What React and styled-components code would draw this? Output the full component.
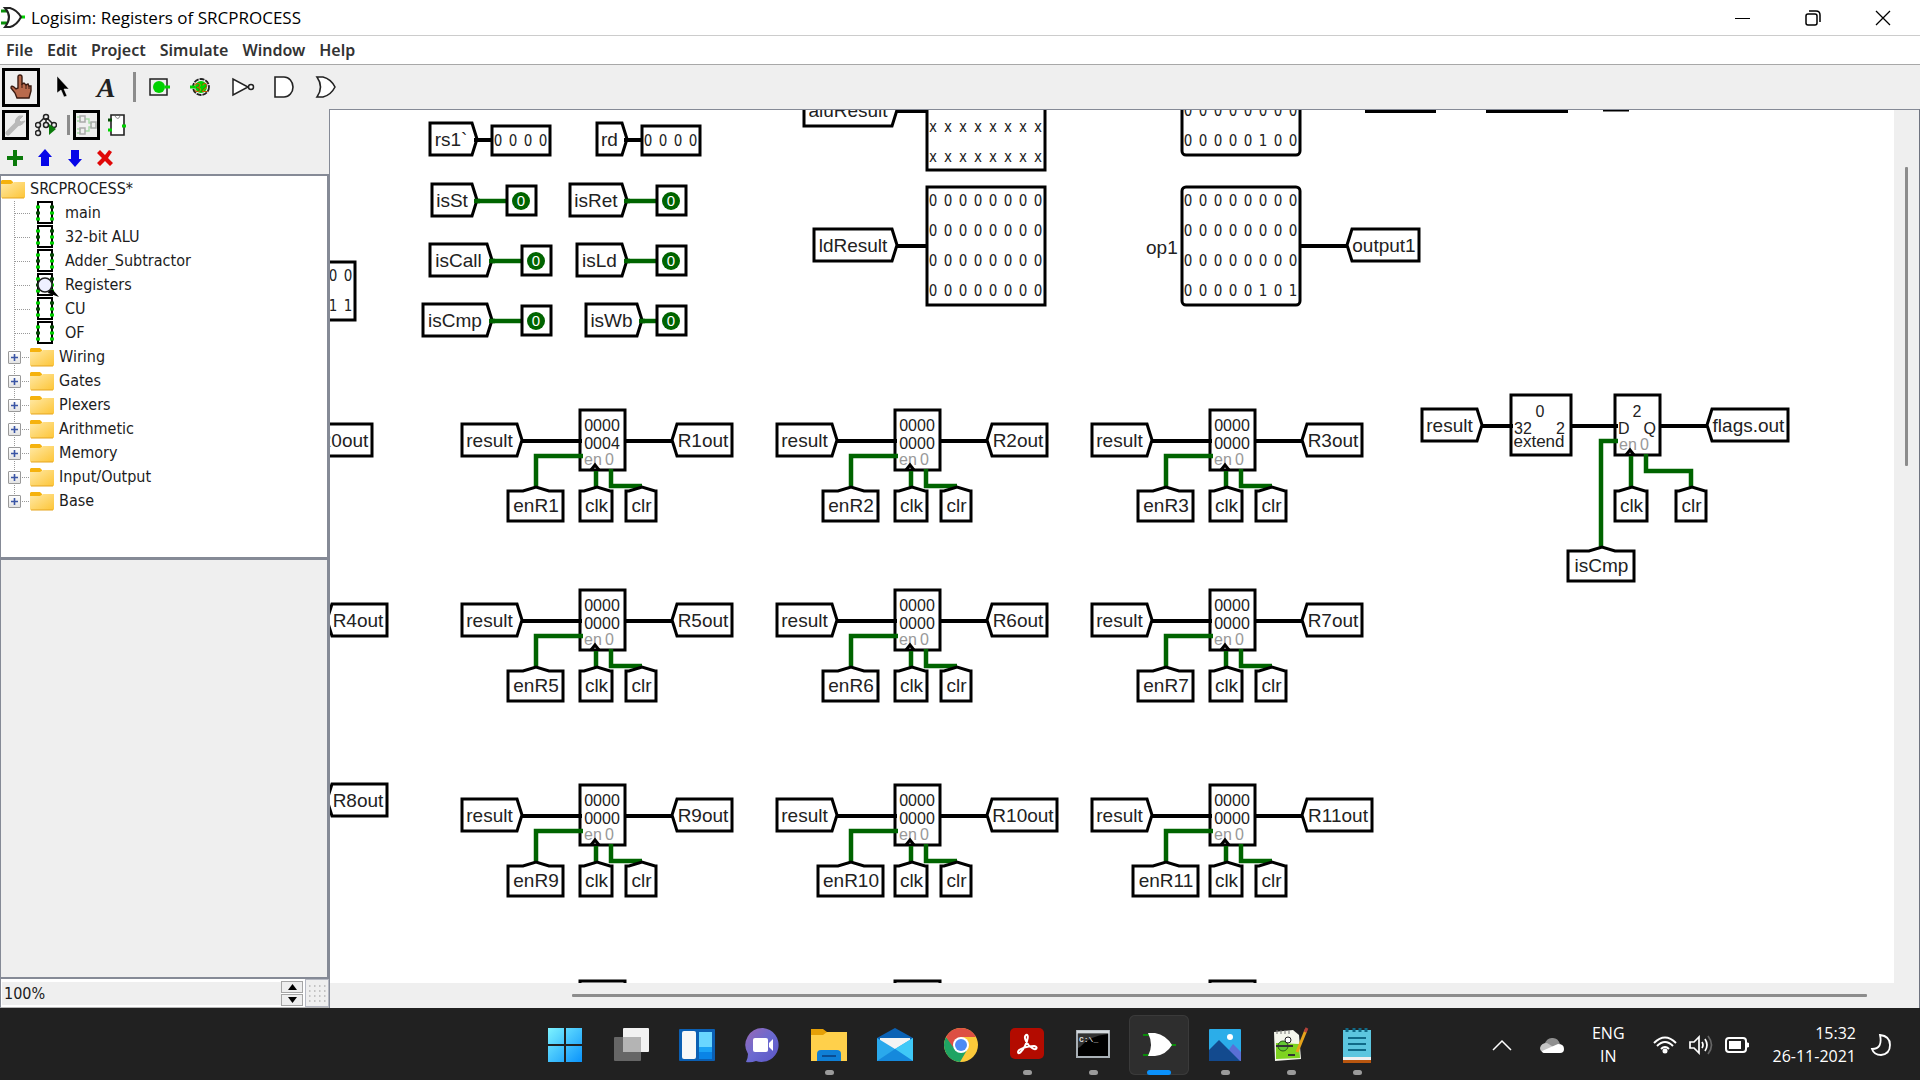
import React from "react";
import styled, { createGlobalStyle, css } from "styled-components";

const GREEN = "#006400";
const LIVE = "#00d200";

const GlobalStyle = createGlobalStyle`
  * { box-sizing: border-box; }
  html, body { margin: 0; padding: 0; background: #efefef; }
  body { font-family: "DejaVu Sans Condensed", "DejaVu Sans", sans-serif; font-size: 16px; color: #1c1c1c; overflow: hidden; }
  button, input { font: inherit; color: inherit; margin: 0; padding: 0; border: 0; background: none; }
  svg { display: block; flex: none; }
  ul { list-style: none; margin: 0; padding: 0; }
`;

const Screen = styled.div`
  display: flex;
  flex-direction: column;
  height: 100vh;
`;

const TitleBar = styled.header`
  display: flex;
  align-items: center;
  height: 36px;
  flex: none;
  padding: 0 2px 0 1px;
  background: #fff;
  border-bottom: 1px solid #ccc;
`;

const Title = styled.h1`
  flex: 1;
  margin: 0 0 0 6px;
  font: 400 17px/36px "Open Sans", "Noto Sans", sans-serif;
  color: #000;
`;

const CaptionButton = styled.button`
  display: flex;
  align-items: center;
  justify-content: center;
  width: 70px;
  height: 35px;
`;

const MenuBar = styled.nav`
  display: flex;
  align-items: center;
  gap: 14px;
  height: 29px;
  flex: none;
  padding: 0 6px;
  background: #fff;
  border-bottom: 1px solid #a8a8a8;
`;

const MenuItem = styled.button`
  font: 600 16px/24px "Noto Sans", "Open Sans", sans-serif;
  color: #333;
`;

const ToolBar = styled.div`
  display: flex;
  align-items: center;
  gap: 4px;
  height: 44px;
  flex: none;
  padding: 0 2px;
  background: #efefef;
`;

const ToolButton = styled.button`
  display: flex;
  align-items: center;
  justify-content: center;
  width: ${(p) => (p.$small ? 27 : 38)}px;
  height: ${(p) => (p.$small ? 30 : 39)}px;
  flex: none;
  ${(p) => p.$active && css`border: 3px solid #000;`}
`;

const Separator = styled.span`
  width: 3px;
  height: ${(p) => (p.$small ? 20 : 30)}px;
  margin-left: 5px;
  background: #8c8c8c;
`;

const Body = styled.main`
  display: flex;
  flex: 1;
  min-height: 0;
  background: #efefef;
`;

const Side = styled.aside`
  display: flex;
  flex-direction: column;
  width: 329px;
  flex: none;
`;

const SideTools = styled.div`
  display: flex;
  align-items: center;
  gap: 3px;
  height: ${(p) => p.$height}px;
  padding-left: ${(p) => p.$inset}px;
  flex: none;
`;

const Explorer = styled.ul`
  height: 385px;
  flex: none;
  background: #fff;
  border: 2px solid #858a96;
  border-left-width: 1px;
  padding-top: 1px;
`;

const Branch = styled.li`
  display: flex;
  align-items: center;
  height: 24px;
  padding-left: ${(p) => (p.$root ? 0 : 7)}px;
`;

const Trunk = styled.ul`
  background: repeating-linear-gradient(#999 0 1px, transparent 1px 2px) 13px 0 / 1px 306px no-repeat;
`;

const Twig = styled.span`
  width: ${(p) => (p.$long ? 15 : 8)}px;
  margin-left: ${(p) => (p.$long ? 7 : 1)}px;
  height: 1px;
  background: repeating-linear-gradient(90deg, #999 0 1px, transparent 1px 2px);
`;

const Expander = styled.button`
  display: flex;
  align-items: center;
  justify-content: center;
  width: 13px;
  height: 13px;
  border: 1px solid #999;
  border-radius: 1px;
  background: linear-gradient(#fff, #e4e4e4);
`;

const IconSlot = styled.span`
  display: flex;
  justify-content: center;
  width: ${(p) => (p.$wide ? 30 : 24)}px;
`;

const BranchName = styled.span`
  margin-left: 5px;
  line-height: 24px;
  white-space: pre;
`;

const Attributes = styled.section`
  flex: 1;
  border: 2px solid #858a96;
  border-top-width: 1px;
  border-left-width: 1px;
`;

const ZoomRow = styled.div`
  display: flex;
  height: 29px;
  flex: none;
  border-left: 1px solid #858a96;
  border-bottom: 1px solid #b5b5b5;
`;

const ZoomField = styled.input`
  flex: 1;
  min-width: 0;
  padding-left: 2px;
  background: #efefef;
  border: 2px solid #fff;
  border-width: 3px 0 2px 1px;
`;

const Spinner = styled.div`
  display: flex;
  flex-direction: column;
  width: 24px;
  padding: 2px 2px 1px 0;
  background: #fff;
  gap: 1px;
`;

const SpinButton = styled.button`
  display: flex;
  flex: 1;
  align-items: center;
  justify-content: center;
  border: 1px solid #a5a5a5;
  background: #eee;
`;

const Grip = styled.span`
  display: flex;
  align-items: center;
  justify-content: center;
  width: 24px;
  border: 1px solid #b5b8c2;
`;

const CanvasPane = styled.section`
  display: grid;
  grid-template-columns: minmax(0, 1fr) 25px;
  grid-template-rows: minmax(0, 1fr) 25px;
  flex: 1;
  min-width: 0;
  border-top: 1px solid #858a96;
  border-left: 1px solid #858a96;
  border-right: 1px solid #6f7480;
`;

const Circuit = styled.svg`
  width: 100%;
  height: 100%;
  background: #fff;
  font-family: "Liberation Sans", Arial, sans-serif;
  fill: none;
  stroke: none;
`;

const VerticalTrack = styled.div`
  display: flex;
  justify-content: center;
  padding: 57px 1px 0 0;
`;

const HorizontalTrack = styled.div`
  display: flex;
  align-items: center;
  padding: 0 27px 1px 242px;
`;

const Thumb = styled.span`
  background: #8c8c8c;
  border-radius: 1px;
  ${(p) => (p.$vertical ? css`width: 3px; height: 299px;` : css`height: 3px; flex: 1;`)}
`;

const TaskBar = styled.footer`
  display: grid;
  grid-template-columns: 1fr auto 1fr;
  align-items: center;
  height: 72px;
  flex: none;
  padding-top: 2px;
  background: #212121;
  color: #fff;
  font: 400 16px/23px "Open Sans", "Noto Sans", sans-serif;
`;

const Apps = styled.div`
  grid-column: 2;
  display: flex;
  gap: 6px;
  padding-left: 2px;
`;

const AppButton = styled.button`
  display: grid;
  grid-template-rows: 1fr 6px;
  justify-items: center;
  align-items: center;
  width: 60px;
  height: 60px;
  padding: 6px 0 0;
  border-radius: 6px;
  ${(p) => p.$active && css`background: #2e2e2e; box-shadow: inset 0 0 0 1px #3a3a3a;`}
`;

const Running = styled.span`
  width: ${(p) => (p.$active ? 24 : 9)}px;
  height: 5px;
  border-radius: 3px;
  background: ${(p) => (p.$active ? "#0a91fb" : "#9b9b9b")};
`;

const Tray = styled.div`
  display: flex;
  align-items: center;
  justify-content: flex-end;
  padding-right: 28px;
`;

const TrayButton = styled.button`
  display: flex;
  align-items: center;
  justify-content: center;
  margin-right: ${(p) => p.$after || 0}px;
`;

const Lines = styled.span`
  display: block;
  text-align: ${(p) => p.$align};
  white-space: pre-line;
`;

/* ---------- circuit parts ---------- */

const Wire = ({ d, live }) => (
  <path d={d} stroke={live ? GREEN : "#000"} strokeWidth={live ? 4.5 : 4} />
);

const Label = ({ x, y, size = 16, anchor = "start", fill = "#222", children }) => (
  <text x={x} y={y} fontSize={size} textAnchor={anchor} fill={fill}>{children}</text>
);

/* Tunnel whose point faces right, left or up; x1 and x2 are its outer sides. */
const Tunnel = ({ x1, x2, y, label, face = "right" }) => {
  const l = x1 + 1;
  const r = x2 - 2;
  let d;
  let cx = (x1 + x2) / 2;
  let base = y + 5;
  if (face === "right") {
    d = `M${l} ${y - 18}H${r - 3}L${r + 2} ${y - 2}L${r - 3} ${y + 14}H${l}Z`;
    cx = (x1 + x2 - 4) / 2;
  } else if (face === "left") {
    d = `M${r + 1} ${y - 18}H${l + 5}L${l} ${y - 2}L${l + 5} ${y + 14}H${r + 1}Z`;
    cx = (x1 + x2 + 2) / 2;
  } else {
    const m = Math.round(cx);
    const w = Math.min(13, (r - l) / 2);
    d = `M${l} ${y + 4}H${m - w}L${m} ${y}L${m + w} ${y + 4}H${r}V${y + 34}H${l}Z`;
    base = y + 25;
  }
  return (
    <g>
      <path d={d} stroke="#000" strokeWidth="3" fill="#fff" />
      <Label x={cx} y={base} size={19} anchor="middle">{label}</Label>
    </g>
  );
};

const Bits = ({ x, y, rows }) => (
  <g fontFamily="DejaVu Sans Condensed, DejaVu Sans, sans-serif" fontSize="15" fill="#222" textAnchor="middle">
    {rows.map((row, j) => (
      <text key={j} y={y + j * 30} x={[...row].map((_, i) => x + i * 15).join(" ")}>{row}</text>
    ))}
  </g>
);

const Box = ({ x, y, w, h, r = 0 }) => (
  <rect x={x} y={y} width={w} height={h} rx={r} stroke="#000" strokeWidth="3" fill="#fff" />
);

const BitPin = ({ x, y }) => (
  <g>
    <Box x={x} y={y - 15} w={29} h={29} />
    <circle cx={x + 14} cy={y} r="9" fill={GREEN} />
    <text x={x + 14} y={y + 5} fontSize="15" textAnchor="middle" fill="#fff">0</text>
  </g>
);

const FlagPin = ({ x1, tip, pin, y, label }) => (
  <g>
    <Wire live d={`M${tip} ${y}H${pin + 1}`} />
    <BitPin x={pin} y={y} />
    <Tunnel x1={x1} x2={tip} y={y + 1} label={label} />
    <Wire live d={`M${tip - 3} ${y}H${tip + 3}`} />
  </g>
);

const RegisterBody = ({ x, y, children }) => (
  <g>
    <Box x={x} y={y} w={45} h={60} />
    {children}
    <Label x={x + 4} y={y + 55} fill="#999">en</Label>
    <Label x={x + 25} y={y + 55} fill="#999">0</Label>
    <path d={`M${x + 11} ${y + 60}L${x + 15} ${y + 55}L${x + 19} ${y + 60}`} stroke="#000" strokeWidth="3" />
  </g>
);

const Register = ({ n, x, y, low = "0000" }) => {
  const wide = n > 9 ? 10 : 0;
  return (
    <g>
      <RegisterBody x={x} y={y - 31}>
        <Label x={x + 22} y={y - 10} anchor="middle">0000</Label>
        <Label x={x + 22} y={y + 8} anchor="middle">{low}</Label>
      </RegisterBody>
      <Wire d={`M${x - 60} ${y}H${x + 2}M${x + 45} ${y}H${x + 92}`} />
      <Wire live d={`M${x + 3} ${y + 15}H${x - 44}V${y + 47}M${x + 16} ${y + 30}V${y + 47}M${x + 31} ${y + 28}V${y + 45}H${x + 62}`} />
      <Tunnel x1={x - 119} x2={x - 58} y={y + 1} label="result" />
      <Tunnel face="left" x1={x + 91} x2={x + 153 + wide} y={y + 1} label={`R${n}out`} />
      <Tunnel face="up" x1={x - 73 - wide / 2} x2={x - 15 + wide / 2} y={y + 46} label={`enR${n}`} />
      <Tunnel face="up" x1={x - 1} x2={x + 34} y={y + 46} label="clk" />
      <Tunnel face="up" x1={x + 45} x2={x + 78} y={y + 46} label="clr" />
    </g>
  );
};

const zeros = "00000000";

const flags = [
  { x1: 431, tip: 477, pin: 507, y: 201, label: "isSt" },
  { x1: 569, tip: 627, pin: 657, y: 201, label: "isRet" },
  { x1: 429, tip: 492, pin: 522, y: 261, label: "isCall" },
  { x1: 576, tip: 627, pin: 657, y: 261, label: "isLd" },
  { x1: 422, tip: 492, pin: 522, y: 321, label: "isCmp" },
  { x1: 585, tip: 642, pin: 657, y: 321, label: "isWb" },
];

const registers = [
  [1, 580, 441], [2, 895, 441], [3, 1210, 441],
  [5, 580, 621], [6, 895, 621], [7, 1210, 621],
  [9, 580, 816], [10, 895, 816], [11, 1210, 816],
  [13, 580, 1012], [14, 895, 1012], [15, 1210, 1012],
];

const CircuitDrawing = () => (
  <Circuit role="img" aria-label="Registers circuit">
    <g transform="translate(-330 -110)">
      <Box x={240} y={262} w={115} h={58} />
      <Bits x={333} y={281} rows={["00", "11"]} />

      <Wire d="M476 140H493M626 140H643" />
      <Box x={492} y={126} w={58} h={29} />
      <Bits x={498} y={146} rows={["0000"]} />
      <Box x={642} y={126} w={58} h={29} />
      <Bits x={648} y={146} rows={["0000"]} />
      <Tunnel x1={429} x2={477} y={141} label="rs1`" />
      <Tunnel x1={596} x2={627} y={141} label="rd" />
      <Wire d="M474 140H492M624 140H642" />
      {flags.map((f) => <FlagPin key={f.label} {...f} />)}

      <Box x={927} y={50} w={118} h={120} />
      <Bits x={933} y={132} rows={["xxxxxxxx", "xxxxxxxx"]} />
      <Wire d="M896 111H928M896 246H928" />
      <Tunnel x1={803} x2={897} y={112} label="aluResult" />
      <Box x={927} y={187} w={118} h={118} />
      <Bits x={933} y={206} rows={[zeros, zeros, zeros, zeros]} />
      <Tunnel x1={813} x2={897} y={247} label="ldResult" />

      <Box x={1182} y={36} w={118} h={119} r={4} />
      <Bits x={1188} y={116} rows={[zeros, "00000100"]} />
      <Box x={1182} y={187} w={118} h={118} r={4} />
      <Bits x={1188} y={206} rows={[zeros, zeros, zeros, "00000101"]} />
      <Label x={1146} y={254} size={19}>op1</Label>
      <Wire d="M1300 246H1348" />
      <Tunnel face="left" x1={1346} x2={1420} y={247} label="output1" />
      <path d="M1365 111H1436M1486 111H1568" stroke="#000" strokeWidth="4" />
      <path d="M1603 110H1629" stroke="#000" strokeWidth="3" />

      <Tunnel face="left" x1={311} x2={373} y={442} label="R0out" />
      <Tunnel face="left" x1={326} x2={388} y={622} label="R4out" />
      <Tunnel face="left" x1={326} x2={388} y={802} label="R8out" />
      {registers.map(([n, x, y]) => (
        <Register key={n} n={n} x={x} y={y} low={n === 1 ? "0004" : "0000"} />
      ))}

      <Box x={1511} y={395} w={60} h={60} />
      <Label x={1540} y={417} anchor="middle">0</Label>
      <Label x={1514} y={434}>32</Label>
      <Label x={1565} y={434} anchor="end">2</Label>
      <Label x={1539} y={447} size={17} anchor="middle">extend</Label>
      <RegisterBody x={1615} y={395}>
        <Label x={1637} y={417} anchor="middle">2</Label>
        <Label x={1618} y={434}>D</Label>
        <Label x={1656} y={434} anchor="end">Q</Label>
      </RegisterBody>
      <Wire d="M1481 426H1513M1571 426H1618M1661 426H1708" />
      <Wire live d="M1618 441H1601V548M1631 456V488M1646 454V471H1691V488" />
      <Tunnel x1={1421} x2={1482} y={427} label="result" />
      <Tunnel face="left" x1={1706} x2={1789} y={427} label="flags.out" />
      <Tunnel face="up" x1={1614} x2={1649} y={487} label="clk" />
      <Tunnel face="up" x1={1675} x2={1708} y={487} label="clr" />
      <Tunnel face="up" x1={1567} x2={1636} y={547} label="isCmp" />
    </g>
  </Circuit>
);

/* ---------- icons ---------- */

const GateLogo = () => (
  <svg width="24" height="22" viewBox="0 0 24 22" fill="none">
    <path d="M0 4H8M0 16H8" stroke="#0a8f0a" strokeWidth="3" />
    <path d="M19 10H25" stroke={LIVE} strokeWidth="3" />
    <path d="M4 1H9Q16 3 20 10Q16 18 9 20H4Q12 10 4 1Z" fill="#fff" stroke="#222" strokeWidth="2" />
  </svg>
);

const HandIcon = () => (
  <svg width="24" height="26" viewBox="0 0 24 26">
    <path d="M9 14V3Q9 1 11 1T13 3V10L15 9L17 11L19 10L20 12L22 12V17L20 24H8L6 19L2 14Q2 11 5 13L7 15Z" fill="#b96a4c" stroke="#3a1a10" strokeWidth="1.4" />
    <path d="M13 10V14M17 11V15M20 12V15" stroke="#3a1a10" />
  </svg>
);

const ArrowIcon = () => (
  <svg width="16" height="24" viewBox="0 0 16 24">
    <path d="M2 1V18L6 15L9 22L12 21L9 14H14Z" fill="#000" stroke="#fff" strokeWidth=".5" />
  </svg>
);

const TextIcon = () => (
  <svg width="30" height="34" viewBox="0 0 30 34">
    <text x="16" y="27" textAnchor="middle" fontFamily="Liberation Serif, serif" fontWeight="700" fontStyle="italic" fontSize="28" fill="#222">A</text>
  </svg>
);

const InputPinIcon = () => (
  <svg width="22" height="20" viewBox="0 0 22 20">
    <rect x="2" y="2" width="17" height="16" fill="none" stroke="#222" strokeWidth="1.5" />
    <circle cx="11" cy="10" r="6" fill={LIVE} />
    <path d="M17 10H22" stroke={LIVE} strokeWidth="3" />
  </svg>
);

const OutputPinIcon = () => (
  <svg width="22" height="20" viewBox="0 0 22 20">
    <circle cx="11" cy="10" r="8" fill="none" stroke="#222" strokeWidth="1.8" strokeDasharray="5 1" />
    <circle cx="11" cy="10" r="6" fill={LIVE} />
    <path d="M0 10H5" stroke={LIVE} strokeWidth="3" />
    <text x="11" y="15" textAnchor="middle" fontFamily="Liberation Sans, sans-serif" fontSize="13" fill="#c05a00">32</text>
  </svg>
);

const NotIcon = () => (
  <svg width="24" height="20" viewBox="0 0 24 20" fill="#fff" stroke="#222" strokeWidth="1.5">
    <path d="M2 2V18L17 10Z" /><circle cx="20" cy="10" r="2.5" />
  </svg>
);

const AndIcon = () => (
  <svg width="24" height="24" viewBox="0 0 24 24" fill="#fff" stroke="#222" strokeWidth="1.6">
    <path d="M2 2H11A9 10 0 0 1 11 22H2Z" />
  </svg>
);

const OrIcon = () => (
  <svg width="24" height="24" viewBox="0 0 24 24" fill="#fff" stroke="#222" strokeWidth="1.6">
    <path d="M2 2H8Q16 4 20 12Q16 20 8 22H2Q9 12 2 2Z" />
  </svg>
);

const WrenchIcon = () => (
  <svg width="22" height="24" viewBox="0 0 22 24" fill="none" stroke="#b9b9b9">
    <path d="M3 20L13 10" strokeWidth="5" strokeLinecap="round" />
    <path d="M14 3Q9 6 11 12Q16 14 20 8L16 9L14 7L18 3Z" fill="#b9b9b9" />
  </svg>
);

const SimTreeIcon = () => (
  <svg width="22" height="24" viewBox="0 0 22 24" fill="none" stroke="#222" strokeWidth="1.5">
    <path d="M9 5L4 10M12 5L17 10M11 5V10M4 14V18" />
    <circle cx="11" cy="4" r="2.5" /><circle cx="3" cy="12" r="2.5" /><circle cx="11" cy="12" r="2.5" />
    <circle cx="19" cy="12" r="2.5" /><circle cx="3" cy="20" r="2.5" />
    <path d="M14 11V22L21 16Z" fill="#0a7a0a" stroke="none" />
  </svg>
);

const LayoutIcon = () => (
  <svg width="20" height="22" viewBox="0 0 20 22" fill="none">
    <path d="M0 3H4M0 7H4M8 5H12V9H15M0 15H4M0 19H4M8 17H12V13H15" stroke="#a5dba5" strokeWidth="1.4" />
    <path d="M3 2H8V8H3ZM3 14H8V20H3ZM14 8H19V14H14Z" stroke="#aaa" strokeWidth="1.5" />
  </svg>
);

const AppearanceIcon = () => (
  <svg width="18" height="22" viewBox="0 0 18 22" fill="none">
    <path d="M3 1H16V21H3Z" fill="#fff" stroke="#222" strokeWidth="1.6" />
    <path d="M7 2Q10 7 12 2" stroke="#888" />
    <path d="M0 6H4" stroke="#064d06" strokeWidth="3" />
    <path d="M0 16H4M14 12H18" stroke={LIVE} strokeWidth="3" />
  </svg>
);

const shapes = {
  "Add circuit": ["#0a7a0a", "M7 1H11V7H17V11H11V17H7V11H1V7H7Z"],
  "Move up": ["#0505e8", "M9 0L16 8H13V17H5V8H2Z"],
  "Move down": ["#0505e8", "M9 18L2 10H5V1H13V10H16Z"],
  "Delete circuit": ["#e00707", "M1 4L4 1L9 6L13 1L16 3L12 9L17 14L14 17L9 12L4 17L1 14L6 9Z"],
};

const ShapeIcon = ({ name }) => (
  <svg width="18" height="18" viewBox="0 0 18 18"><path fill={shapes[name][0]} d={shapes[name][1]} /></svg>
);

const ChipIcon = ({ viewed }) => (
  <svg width="22" height="24" viewBox="0 0 22 24" overflow="visible">
    <path d="M4 1H18V22H4Z" fill="#fff" stroke="#000" strokeWidth="2" />
    <path d="M5 5V19M17 5V19" stroke="#fff" strokeWidth="4" strokeDasharray="1 5" />
    <path d="M2 6H6M2 18H6M16 12H20M16 18H20" stroke={LIVE} strokeWidth="3" />
    <path d="M2 12H6M16 6H20" stroke="#064d06" strokeWidth="3" />
    {viewed && <path d="M15 17L19 17L25 24L14 20Z" fill="#000" />}
    {viewed && <circle cx="11" cy="12" r="7" fill="#eef0ff" stroke="#222" strokeWidth="1.6" />}
  </svg>
);

const FolderIcon = () => (
  <svg width="24" height="20" viewBox="0 0 24 20">
    <defs>
      <linearGradient id="folder" x1="0" y1="0" x2="1" y2="1">
        <stop offset="0" stopColor="#ffe9a6" /><stop offset="1" stopColor="#fdc537" />
      </linearGradient>
    </defs>
    <path d="M1 1H10L12 3V8H0V2Z" fill="#f5b20d" />
    <path d="M0 5H10L13 3H24V18Q24 19 23 19H1Q0 19 0 18Z" fill="url(#folder)" />
    <path d="M1 19H23" stroke="#e5a520" />
  </svg>
);

const PlusIcon = () => (
  <svg width="9" height="9" viewBox="0 0 9 9"><path d="M1 4.5H8M4.5 1V8" stroke="#3a55a5" strokeWidth="1.6" /></svg>
);

const appIcons = {
  Start: (
    <>
      <defs><linearGradient id="win" x1="0" y1="0" x2="1" y2="1"><stop offset="0" stopColor="#7df3ff" /><stop offset="1" stopColor="#0a93fb" /></linearGradient></defs>
      <path d="M1 1H17V17H1ZM19 1H35V17H19ZM1 19H17V35H1ZM19 19H35V35H19Z" fill="url(#win)" />
    </>
  ),
  "Task View": (
    <>
      <rect x="10" y="1" width="26" height="24" rx="1" fill="#f2f2f2" />
      <rect x="1" y="10" width="27" height="24" rx="1" fill="#666" />
      <path d="M10 10H28V25H10Z" fill="#b4b4b4" />
    </>
  ),
  Widgets: (
    <>
      <rect x="0" y="2" width="36" height="32" rx="1" fill="#0b5fb3" />
      <rect x="3" y="4" width="14" height="28" rx="2" fill="#f7f7f7" />
      <path d="M20 5H33V20H20Z" fill="#69d6ff" /><path d="M20 20H33V25H20Z" fill="#1ba3f5" /><path d="M20 25H33V32H20Z" fill="#0a84e6" />
    </>
  ),
  Chat: (
    <>
      <defs><linearGradient id="chat" x1="0" y1="0" x2="1" y2="1"><stop offset="0" stopColor="#9a68b5" /><stop offset=".5" stopColor="#6b6ad0" /><stop offset="1" stopColor="#5b54c5" /></linearGradient></defs>
      <path d="M18 1A17 17 0 1 1 11 34Q6 36 1 35Q3 31 3 27A17 17 0 0 1 18 1Z" fill="url(#chat)" />
      <rect x="8" y="11" width="15" height="14" rx="2" fill="#fff" /><path d="M24 16L28 12V24L24 20Z" fill="#fff" />
    </>
  ),
  "File Explorer": (
    <>
      <path d="M0 2H12L16 5H34V12H0Z" fill="#e6a007" />
      <path d="M0 8H12L16 5H36V34H0Z" fill="#ffd04b" />
      <path d="M6 34V27Q6 23 10 23H26Q30 23 30 27V34Z" fill="#0f7fd6" /><path d="M11 29H25" stroke="#0a4d93" strokeWidth="2" />
    </>
  ),
  Mail: (
    <>
      <path d="M0 11L18 1L36 11V20H0Z" fill="#0b62b5" />
      <path d="M3 11H33V24H3Z" fill="#f4f4f4" />
      <path d="M0 11L18 22L36 11V34H0Z" fill="#2aa9ec" /><path d="M18 22L36 11V34Z" fill="#3fc9f7" /><path d="M0 34L18 22L36 34Z" fill="#1589dc" />
    </>
  ),
  Chrome: (
    <>
      <circle cx="18" cy="18" r="17" fill="#fbc93a" />
      <path d="M18 18H10L3 10A17 17 0 0 0 17 35L24 23Z" fill="#1fa463" />
      <path d="M18 10H33A17 17 0 0 0 3 10L10 20Z" fill="#dd4f43" />
      <circle cx="18" cy="18" r="8" fill="#fff" /><circle cx="18" cy="18" r="6" fill="#4c8bf5" />
    </>
  ),
  Acrobat: (
    <>
      <rect x="1" y="1" width="34" height="31" rx="5" fill="#b30b00" />
      <path d="M17 8C20 7 19 13 16 19C13 25 9 28 9 25C9 22 18 19 25 19C30 20 27 24 23 21C18 18 14 10 17 8Z" fill="none" stroke="#fff" strokeWidth="2" />
    </>
  ),
  "Command Prompt": (
    <>
      <rect x="2" y="4" width="32" height="26" fill="#000" stroke="#a9b0b6" strokeWidth="2" />
      <path d="M2 5H34" stroke="#d5dade" strokeWidth="3" /><path d="M3 7H33Q14 9 5 20L3 21Z" fill="#333" />
      <text x="4" y="15" fontSize="8" fontWeight="700" fontFamily="Liberation Mono, monospace" fill="#ddd">C:\_</text>
    </>
  ),
  Logisim: (
    <>
      <path d="M2 8H10M2 28H10M30 18H35" stroke="#0a8a0a" strokeWidth="2" />
      <path d="M7 6H14Q25 8 31 18Q25 28 14 29H7Q13 18 7 6Z" fill="#fff" />
    </>
  ),
  Photos: (
    <>
      <rect x="2" y="2" width="32" height="32" rx="1" fill="#2bade9" />
      <path d="M14 34L26 17L34 25V34Z" fill="#5a6fd6" /><path d="M2 23L12 13L33 34H2Z" fill="#134a8e" /><circle cx="23" cy="10" r="3" fill="#fff" />
    </>
  ),
  "Notepad++": (
    <>
      <path d="M1 5L20 3L26 8L28 32L2 34Z" fill="#f4f6ec" />
      <path d="M3 16L26 17L27 31L3 32Z" fill="#7ed321" /><path d="M4 3V7M8 3V7M12 3V7M16 3V7" stroke="#777" />
      <circle cx="10" cy="19" r="5" fill="#63c832" stroke="#2d5c17" /><circle cx="15" cy="13" r="3" fill="#fff" stroke="#222" />
      <path d="M3 19H20M15 28H22" stroke="#333" strokeWidth="2" /><path d="M33 3L24 25" stroke="#e6a31b" strokeWidth="3" /><path d="M34 1L32 5" stroke="#b5413a" strokeWidth="3" />
    </>
  ),
  Notepad: (
    <>
      <path d="M4 31H32V36H4Z" fill="#b8560f" /><path d="M4 28H32V33H4Z" fill="#f0f0f0" />
      <path d="M4 3H32V30H4Z" fill="#5cc6df" />
      <path d="M9 11H27M9 17H27M9 23H27" stroke="#0f6a88" strokeWidth="2" />
      <path d="M8 1V5M15 1V5M21 1V5M27 1V5" stroke="#0f6a88" strokeWidth="3" />
    </>
  ),
};

const running = ["File Explorer", "Acrobat", "Command Prompt", "Logisim", "Photos", "Notepad++", "Notepad"];

const tools = [
  ["Poke", HandIcon], ["Select", ArrowIcon], ["Text", TextIcon], null,
  ["Input pin", InputPinIcon], ["Output pin", OutputPinIcon], ["NOT gate", NotIcon], ["AND gate", AndIcon], ["OR gate", OrIcon],
];

const circuits = ["main", "32-bit ALU", "Adder_Subtractor", "Registers", "CU", "OF"];
const libraries = ["Wiring", "Gates", "Plexers", "Arithmetic", "Memory", "Input/Output", "Base"];

export default function App() {
  return (
    <Screen>
      <GlobalStyle />
      <TitleBar>
        <GateLogo />
        <Title>Logisim: Registers of SRCPROCESS</Title>
        <CaptionButton aria-label="Minimize">
          <svg width="16" height="16" stroke="#000"><path d="M0 8.500H15" /></svg>
        </CaptionButton>
        <CaptionButton aria-label="Restore">
          <svg width="16" height="18" fill="none" stroke="#000" strokeWidth="1.500"><rect x="1" y="5" width="11" height="11" rx="2" /><path d="M4 2H11Q15 2 15 6V13" /></svg>
        </CaptionButton>
        <CaptionButton aria-label="Close">
          <svg width="16" height="16" stroke="#000" strokeWidth="1.300"><path d="M1 1L15 15M15 1L1 15" /></svg>
        </CaptionButton>
      </TitleBar>
      <MenuBar>
        {["File", "Edit", "Project", "Simulate", "Window", "Help"].map((m) => <MenuItem key={m}>{m}</MenuItem>)}
      </MenuBar>
      <ToolBar>
        {tools.map((t, i) => {
          if (!t) return <Separator key={i} />;
          const [name, Icon] = t;
          return <ToolButton key={name} aria-label={name} $active={i === 0}><Icon /></ToolButton>;
        })}
      </ToolBar>
      <Body>
        <Side>
          <SideTools $height={32} $inset={2}>
            <ToolButton $small $active aria-label="Toolbox"><WrenchIcon /></ToolButton>
            <ToolButton $small aria-label="Simulation tree"><SimTreeIcon /></ToolButton>
            <Separator $small />
            <ToolButton $small $active aria-label="Edit layout"><LayoutIcon /></ToolButton>
            <ToolButton $small aria-label="Edit appearance"><AppearanceIcon /></ToolButton>
          </SideTools>
          <SideTools $height={33} $inset={1}>
            {Object.keys(shapes).map((s) => <ToolButton $small key={s} aria-label={s}><ShapeIcon name={s} /></ToolButton>)}
          </SideTools>
          <Explorer>
            <Branch $root>
              <FolderIcon />
              <BranchName>SRCPROCESS*</BranchName>
            </Branch>
            <Trunk>
              {circuits.map((c) => (
                <Branch key={c}>
                  <Twig $long />
                  <IconSlot $wide><ChipIcon viewed={c === "Registers"} /></IconSlot>
                  <BranchName>{c}</BranchName>
                </Branch>
              ))}
              {libraries.map((l) => (
                <Branch key={l}>
                  <Expander aria-label={`Expand ${l}`}><PlusIcon /></Expander>
                  <Twig />
                  <IconSlot><FolderIcon /></IconSlot>
                  <BranchName>{l}</BranchName>
                </Branch>
              ))}
            </Trunk>
          </Explorer>
          <Attributes aria-label="Attributes" />
          <ZoomRow>
            <ZoomField aria-label="Zoom" defaultValue="100%" />
            <Spinner>
              <SpinButton aria-label="Zoom in"><svg width="9" height="6"><path d="M0 6L4.500 0L9 6Z" /></svg></SpinButton>
              <SpinButton aria-label="Zoom out"><svg width="9" height="6"><path d="M0 0L4.500 6L9 0Z" /></svg></SpinButton>
            </Spinner>
            <Grip>
              <svg width="17" height="17" stroke="#b5b5b5" strokeWidth="1.500" strokeDasharray="1.500 3.500"><path d="M0 1H17M0 6H17M0 11H17M0 16H17" /></svg>
            </Grip>
          </ZoomRow>
        </Side>
        <CanvasPane>
          <CircuitDrawing />
          <VerticalTrack><Thumb $vertical /></VerticalTrack>
          <HorizontalTrack><Thumb /></HorizontalTrack>
        </CanvasPane>
      </Body>
      <TaskBar>
        <Apps>
          {Object.entries(appIcons).map(([name, art]) => (
            <AppButton key={name} aria-label={name} $active={name === "Logisim"}>
              <svg width="36" height="36" viewBox="0 0 36 36">{art}</svg>
              {running.includes(name) && <Running $active={name === "Logisim"} />}
            </AppButton>
          ))}
        </Apps>
        <Tray>
          <TrayButton $after={28} aria-label="Show hidden icons">
            <svg width="20" height="12" fill="none" stroke="#fff" strokeWidth="1.500"><path d="M1 11L10 2L19 11" /></svg>
          </TrayButton>
          <TrayButton $after={28} aria-label="OneDrive">
            <svg width="24" height="17"><path d="M4 8Q7 0 13 1Q18 1 20 7L12 12Z" fill="#8f8f8f" /><path d="M5 16Q0 15 0 11Q1 6 7 6L20 14Z" fill="#c4c4c4" /><path d="M5 16Q2 16 2 14L18 7Q24 7 24 12Q24 16 20 16Z" fill="#fff" /></svg>
          </TrayButton>
          <TrayButton $after={28}><Lines $align="center">{"ENG\nIN"}</Lines></TrayButton>
          <TrayButton $after={12} aria-label="Network">
            <svg width="24" height="18" viewBox="0 0 24 18" fill="none" stroke="#fff" strokeWidth="2"><path d="M1 7Q12 -4 23 7M4 10Q12 2 20 10M8 13Q12 9 16 13" /><circle cx="12" cy="15" r="1.500" fill="#fff" /></svg>
          </TrayButton>
          <TrayButton $after={12} aria-label="Volume">
            <svg width="24" height="20" viewBox="0 0 24 20" fill="none" stroke="#fff" strokeWidth="1.700"><path d="M1 7V13H5L10 18V2L5 7ZM13 7Q15 10 13 13M16 4Q20 10 16 16" /><path d="M19 1Q26 10 19 19" stroke="#666" /></svg>
          </TrayButton>
          <TrayButton $after={24} aria-label="Battery">
            <svg width="24" height="16" viewBox="0 0 24 16"><rect x="1" y="1" width="20" height="14" rx="3" fill="none" stroke="#fff" strokeWidth="2" /><rect x="4" y="4" width="12" height="8" fill="#fff" /><path d="M21 5L24 6V10L21 11Z" fill="#fff" /></svg>
          </TrayButton>
          <TrayButton $after={14}><Lines $align="right">{"15:32\n26-11-2021"}</Lines></TrayButton>
          <TrayButton aria-label="Focus assist">
            <svg width="22" height="22" viewBox="0 0 22 22" fill="none" stroke="#fff" strokeWidth="1.800"><path d="M10 1Q20 2 20 11Q20 20 11 21Q4 21 2 15Q13 15 10 1Z" /></svg>
          </TrayButton>
        </Tray>
      </TaskBar>
    </Screen>
  );
}
